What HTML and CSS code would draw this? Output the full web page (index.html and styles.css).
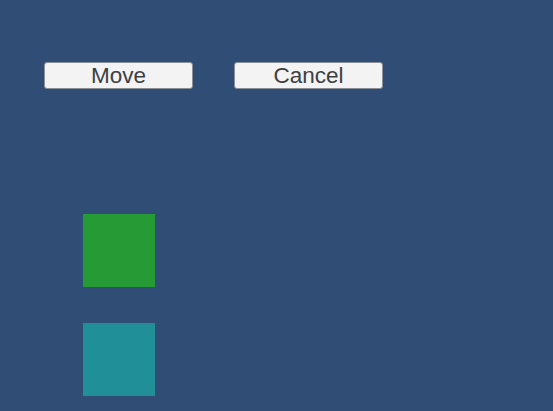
FILE: index.html
```html
<!DOCTYPE html>
<html>
<head>
<meta charset="utf-8">
<link rel="stylesheet" href="styles.css">
</head>
<body>
<div class="stage">
  <div class="buttons">
    <button class="btn">Move</button>
    <button class="btn">Cancel</button>
  </div>
  <div class="squares">
    <div class="sq green"></div>
    <div class="sq teal"></div>
  </div>
</div>
</body>
</html>
```

FILE: styles.css
```css
html, body {
  margin: 0;
  padding: 0;
  width: 553px;
  height: 411px;
  overflow: hidden;
  background: #2f4d75;
}
.stage {
  padding: 62px 0 0 44px;
  display: flex;
  flex-direction: column;
}
.buttons {
  display: flex;
  gap: 41px;
}
.btn {
  box-sizing: border-box;
  width: 149px;
  height: 27px;
  margin: 0;
  padding: 0;
  background: #f3f3f3;
  border: 1px solid #8a8f98;
  border-radius: 3px;
  font-family: "Liberation Sans", Arial, sans-serif;
  font-size: 22.5px;
  color: #3c4045;
  line-height: 25px;
}
.squares {
  margin: 125px 0 0 39px;
  display: flex;
  flex-direction: column;
  gap: 36px;
}
.sq {
  width: 72px;
  height: 73px;
}
.green { background: #269a34; }
.teal { background: #218f98; }
```
